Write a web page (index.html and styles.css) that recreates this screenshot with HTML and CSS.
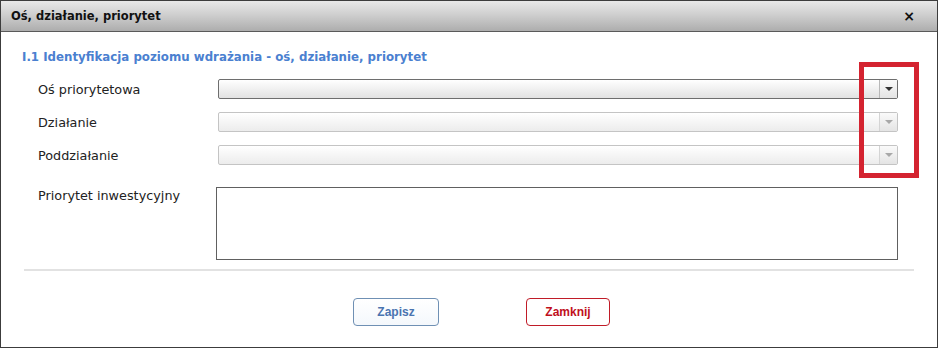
FILE: index.html
```html
<!DOCTYPE html>
<html lang="pl">
<head>
    <meta charset="UTF-8">
    <title>Oś, działanie, priorytet</title>
    <link rel="stylesheet" href="styles.css">
</head>
<body>

    <div class="window">
        <div class="titlebar">
            <span class="title">Oś, działanie, priorytet</span>
            <span class="close">×</span>
        </div>

        <div class="content">
            <h2>I.1 Identyfikacja poziomu wdrażania - oś, działanie, priorytet</h2>

            <div class="form">
                <div class="row">
                    <label>Oś priorytetowa</label>
                    <div class="select">
                        <span class="value"></span>
                        <span class="trigger"><span class="arrow"></span></span>
                    </div>
                </div>
                <div class="row">
                    <label>Działanie</label>
                    <div class="select disabled">
                        <span class="value"></span>
                        <span class="trigger"><span class="arrow"></span></span>
                    </div>
                </div>
                <div class="row">
                    <label>Poddziałanie</label>
                    <div class="select disabled">
                        <span class="value"></span>
                        <span class="trigger"><span class="arrow"></span></span>
                    </div>
                </div>
                <div class="row area">
                    <label>Priorytet inwestycyjny</label>
                    <div class="textarea"></div>
                </div>
            </div>

            <hr class="sep">

            <div class="buttons">
                <button class="btn save">Zapisz</button>
                <button class="btn cancel">Zamknij</button>
            </div>
        </div>

        <div class="highlight"></div>
    </div>

</body>
</html>
```

FILE: styles.css
```css
body {
    margin: 0;
    background: #fff;
    font-family: "DejaVu Sans", Verdana, sans-serif;
    font-size: 12px;
    color: #222;
}
.window {
    position: relative;
    width: 938px;
    height: 348px;
    box-sizing: border-box;
    border: 1px solid #3c3c3c;
    background: #fff;
}
.titlebar {
    height: 30px;
    border-bottom: 1px solid #5a5a5a;
    background: linear-gradient(#e8e8e8, #cfcfcf 45%, #adadad);
    display: flex;
    align-items: center;
    justify-content: space-between;
    padding: 0 22px 0 10px;
}
.title {
    font-weight: bold;
    font-size: 11.5px;
    color: #111;
}
.close {
    font-weight: bold;
    font-size: 14px;
    color: #111;
}
.content {
    padding: 17px 0 0 21px;
}
h2 {
    margin: 0;
    font-size: 11.8px;
    line-height: 16px;
    color: #4a80d0;
}
.form {
    padding: 14px 0 0 16px;
}
.row {
    display: flex;
    align-items: center;
    margin-bottom: 13px;
}
.row label {
    width: 180px;
    font-size: 12.8px;
}
.select {
    display: flex;
    width: 680px;
    height: 20px;
    box-sizing: border-box;
    border: 1px solid #6e6e6e;
    border-radius: 2px;
    background: linear-gradient(#ffffff, #e2e2e2);
}
.select .value {
    flex: 1;
}
.select .trigger {
    width: 17px;
    border-left: 1px solid #b8b8b8;
    display: flex;
    align-items: center;
    justify-content: center;
    background: linear-gradient(#fafafa, #e4e4e4);
}
.arrow {
    width: 0;
    height: 0;
    border-left: 4px solid transparent;
    border-right: 4px solid transparent;
    border-top: 4px solid #333;
}
.select.disabled {
    border-color: #c4c4c4;
    background: linear-gradient(#ffffff, #ececec);
}
.select.disabled .trigger {
    border-left-color: #d4d4d4;
}
.select.disabled .arrow {
    border-top-color: #a8a8a8;
}
.row.area {
    align-items: flex-start;
    margin-top: 22px;
    margin-bottom: 0;
}
.row.area label {
    width: 178px;
    padding-top: 1px;
}
.textarea {
    width: 682px;
    height: 73px;
    box-sizing: border-box;
    border: 1px solid #606060;
}
.sep {
    margin: 9px 0 0 2px;
    width: 890px;
    height: 2px;
    border: 0;
    background: #e2e2e2;
}
.buttons {
    display: flex;
    gap: 87px;
    padding: 27px 0 0 331px;
}
.btn {
    height: 28px;
    border-radius: 4px;
    background: linear-gradient(#ffffff, #f4f8fc);
    font-family: "Liberation Sans", Arial, sans-serif;
    font-weight: bold;
    font-size: 12px;
}
.save {
    width: 86px;
    border: 1px solid #6f90b4;
    color: #4a74b0;
}
.cancel {
    width: 84px;
    border: 1px solid #c01c28;
    color: #c0101c;
    background: #fff;
}
.highlight {
    position: absolute;
    left: 858px;
    top: 61px;
    width: 50px;
    height: 106px;
    border: 5px solid #d42330;
}
```
